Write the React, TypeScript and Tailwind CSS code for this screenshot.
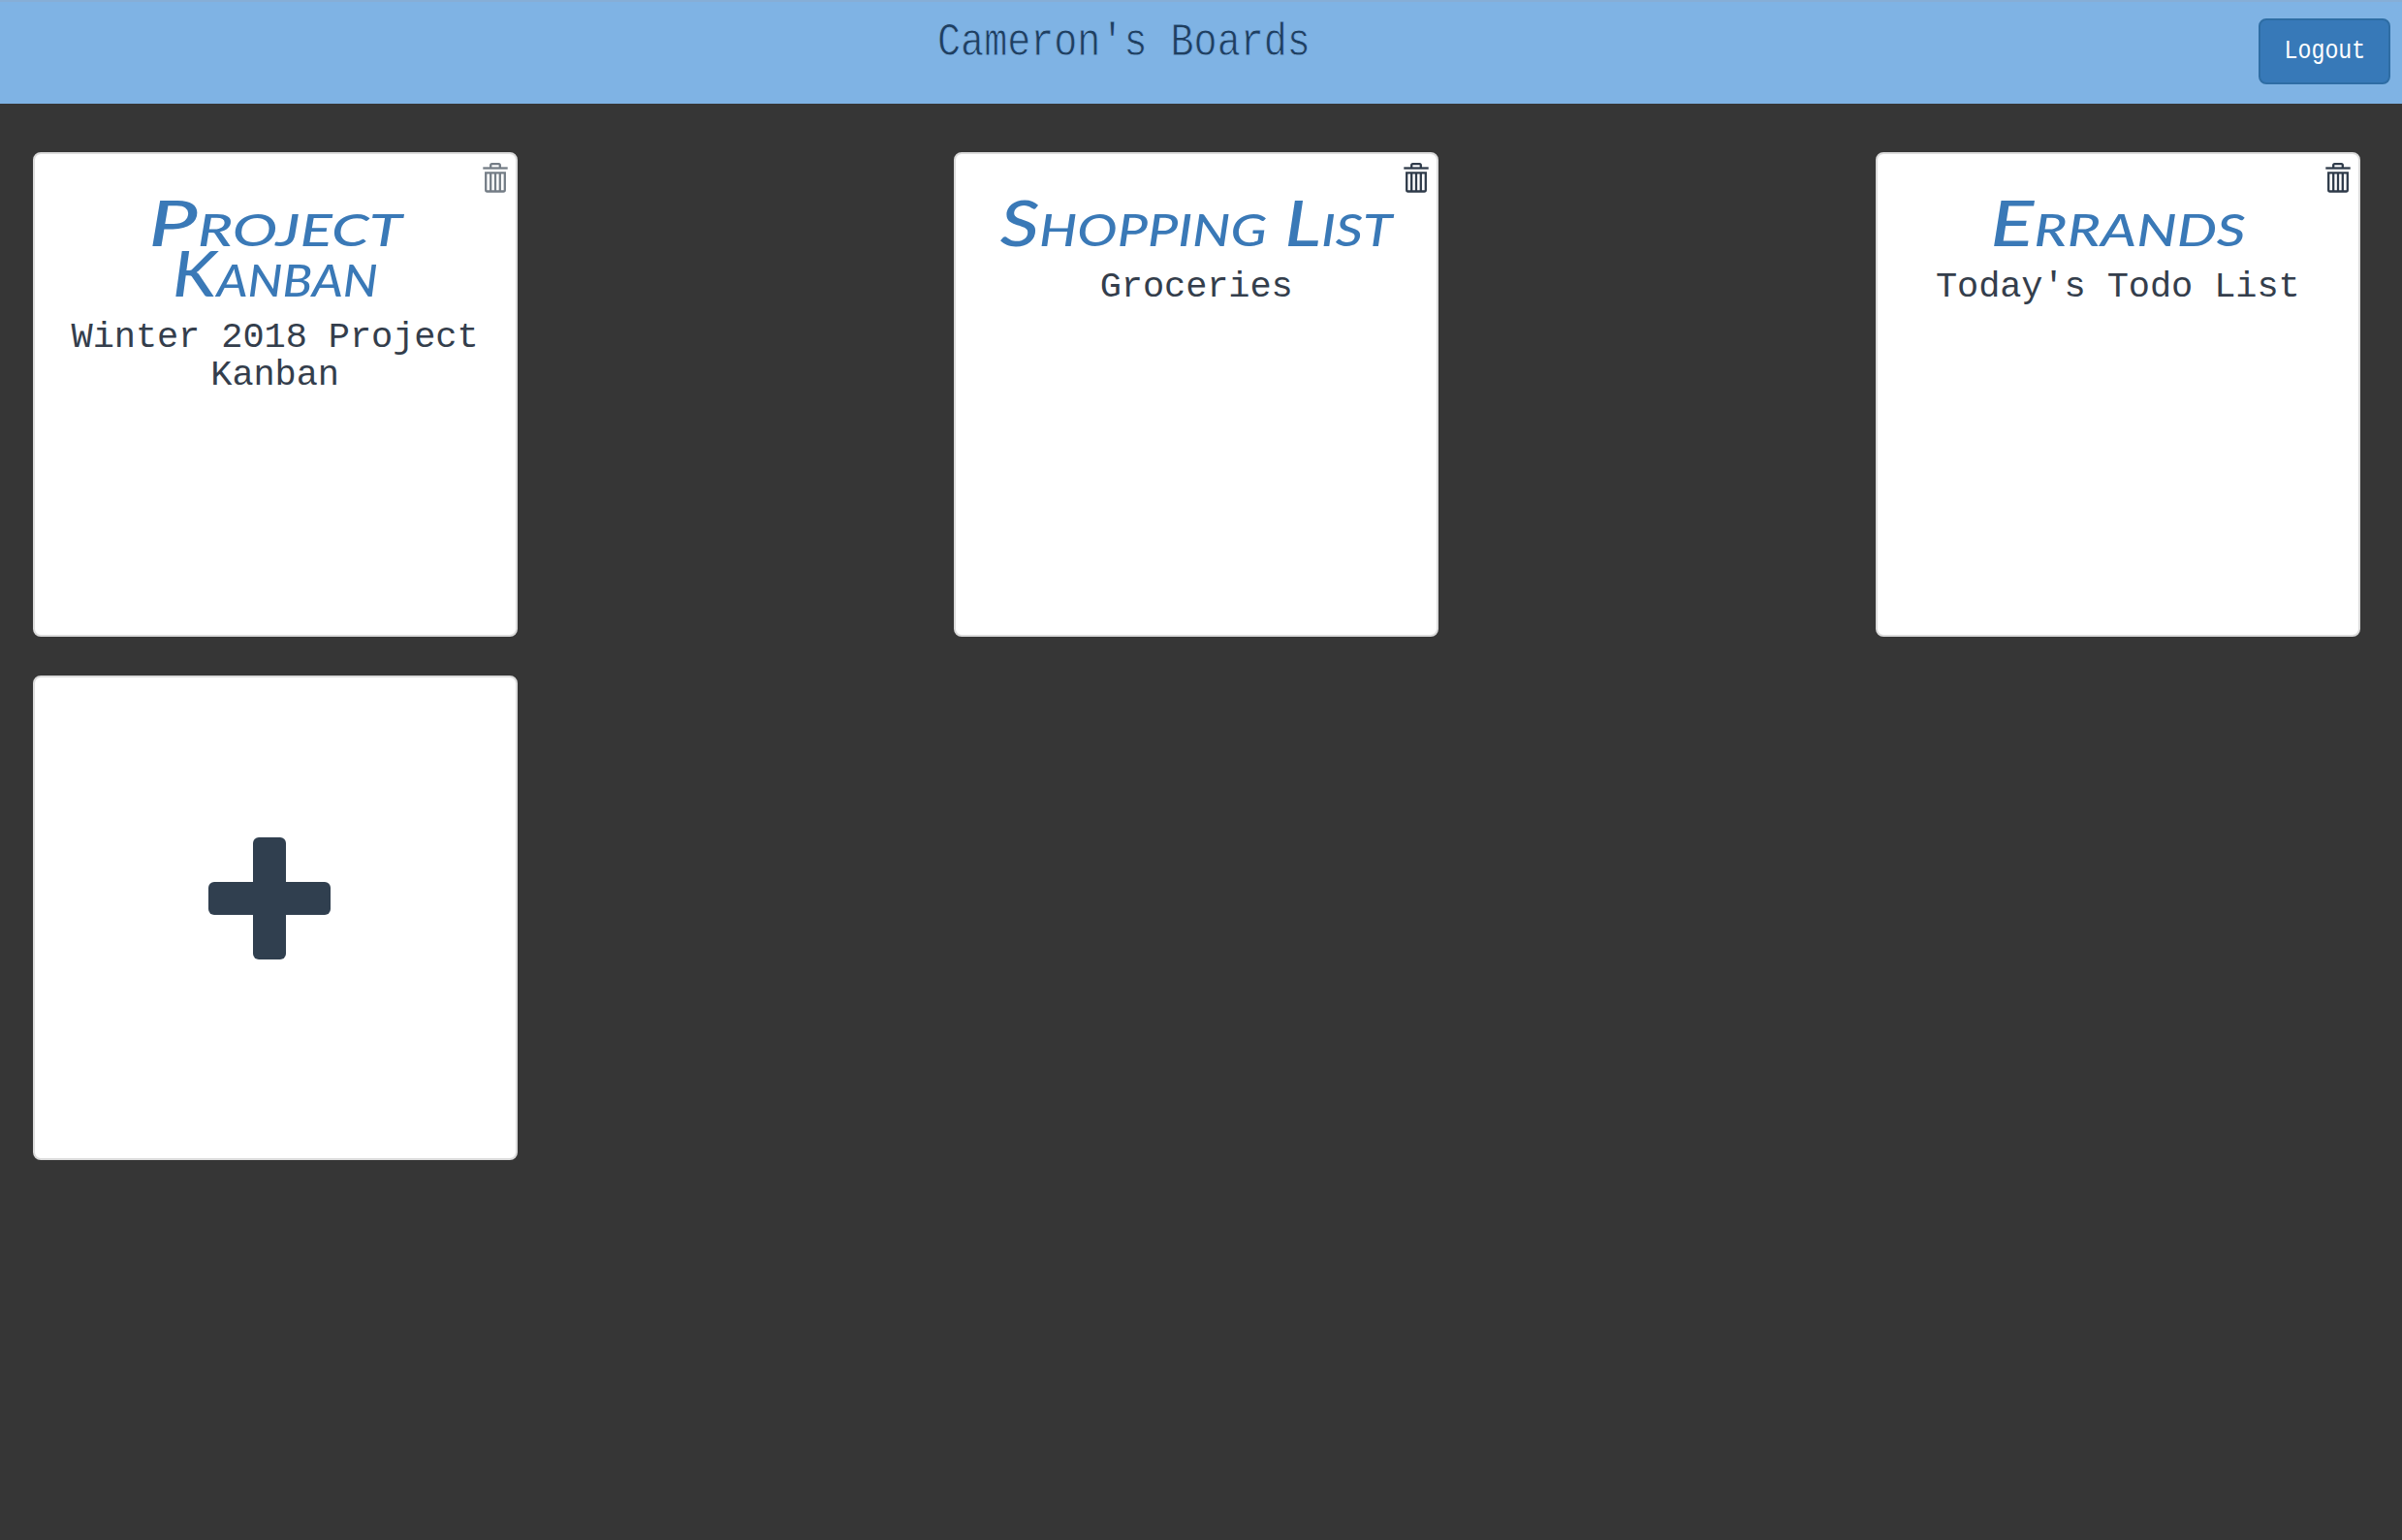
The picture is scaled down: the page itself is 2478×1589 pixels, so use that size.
type Board = { title: string[]; stretch: string[]; description: string; faded?: boolean };

const boards: Board[] = [
  {
    title: ['Project', 'Kanban'],
    stretch: ['scale-x-[1.35]', 'scale-x-[1.1]'],
    description: 'Winter 2018 Project Kanban',
    faded: true,
  },
  { title: ['Shopping List'], stretch: ['scale-x-[1.2]'], description: 'Groceries' },
  { title: ['Errands'], stretch: ['scale-x-[1.27]'], description: "Today's Todo List" },
];

const cardClass = 'relative h-[500px] w-[500px] rounded-lg border-2 border-[#dcdcdc] bg-white';

function TrashIcon({ faded }: { faded?: boolean }) {
  return (
    <svg
      className={`absolute right-[8px] top-[9px] h-[31px] w-[26px] ${faded ? 'text-[#747d86]' : 'text-[#2f3b4a]'}`}
      viewBox="0 0 26 31"
      fill="none"
      stroke="currentColor"
      strokeWidth="2.3"
    >
      <path d="M0.3 5.5H25.7" />
      <path d="M8.2 5.5V2.6Q8.2 1.2 9.6 1.2H16.4Q17.8 1.2 17.8 2.6V5.5" />
      <path d="M3.2 10.4H22.8V28Q22.8 29.5 21.3 29.5H4.7Q3.2 29.5 3.2 28Z" />
      <path d="M8.2 10.4V29.5M13 10.4V29.5M17.8 10.4V29.5" />
    </svg>
  );
}

function BoardCard({ board }: { board: Board }) {
  return (
    <article className={`${cardClass} pt-[44px] text-center`}>
      <TrashIcon faded={board.faded} />
      <h2 className="font-['Lato',sans-serif] text-[66px] font-medium italic leading-[52px] text-[#3a79b7] [font-variant-caps:small-caps]">
        {board.title.map((line, i) => (
          <span key={line} className={`block whitespace-nowrap ${board.stretch[i]}`}>
            {line}
          </span>
        ))}
      </h2>
      <p className="mt-[22px] px-6 font-['Liberation_Mono',monospace] text-[37px] leading-[39.4px] tracking-[-0.1px] text-[#343e4c]">
        {board.description}
      </p>
    </article>
  );
}

export default function App() {
  return (
    <div className="min-h-[1589px] bg-[#363636]">
      <header className="grid h-[107px] grid-cols-[1fr_148px] border-t-2 border-[#86aed6] bg-[#7fb3e4]">
        <h1 className="mt-[14px] ml-[-11px] justify-self-center whitespace-nowrap font-['Liberation_Mono',monospace] text-[48px] leading-[56px] text-[#1f3f5f] scale-x-[0.835] [-webkit-text-stroke:0.8px_#7fb3e4]">
          Cameron's Boards
        </h1>
        <button className="mt-[17px] flex h-[68px] w-[136px] items-center justify-center rounded-lg border-2 border-[#2e6da4] bg-[#3779b8] font-['Liberation_Mono',monospace] text-[28px] text-white">
          <span className="block scale-x-[0.83]">Logout</span>
        </button>
      </header>
      <main className="grid grid-cols-[500px_500px_500px] justify-between gap-y-10 pl-[33.6px] pr-[43.2px] pt-[50px]">
        {boards.map((b) => (
          <BoardCard key={b.description} board={b} />
        ))}
        <button className={`${cardClass} flex items-center justify-center pr-[11px]`} aria-label="Add board">
          <svg className="-mt-[41px] h-[126px] w-[126px]" viewBox="0 0 126 126" fill="#303f4f">
            <rect x="46" y="0" width="34" height="126" rx="6" />
            <rect x="0" y="46" width="126" height="34" rx="6" />
          </svg>
        </button>
      </main>
    </div>
  );
}
